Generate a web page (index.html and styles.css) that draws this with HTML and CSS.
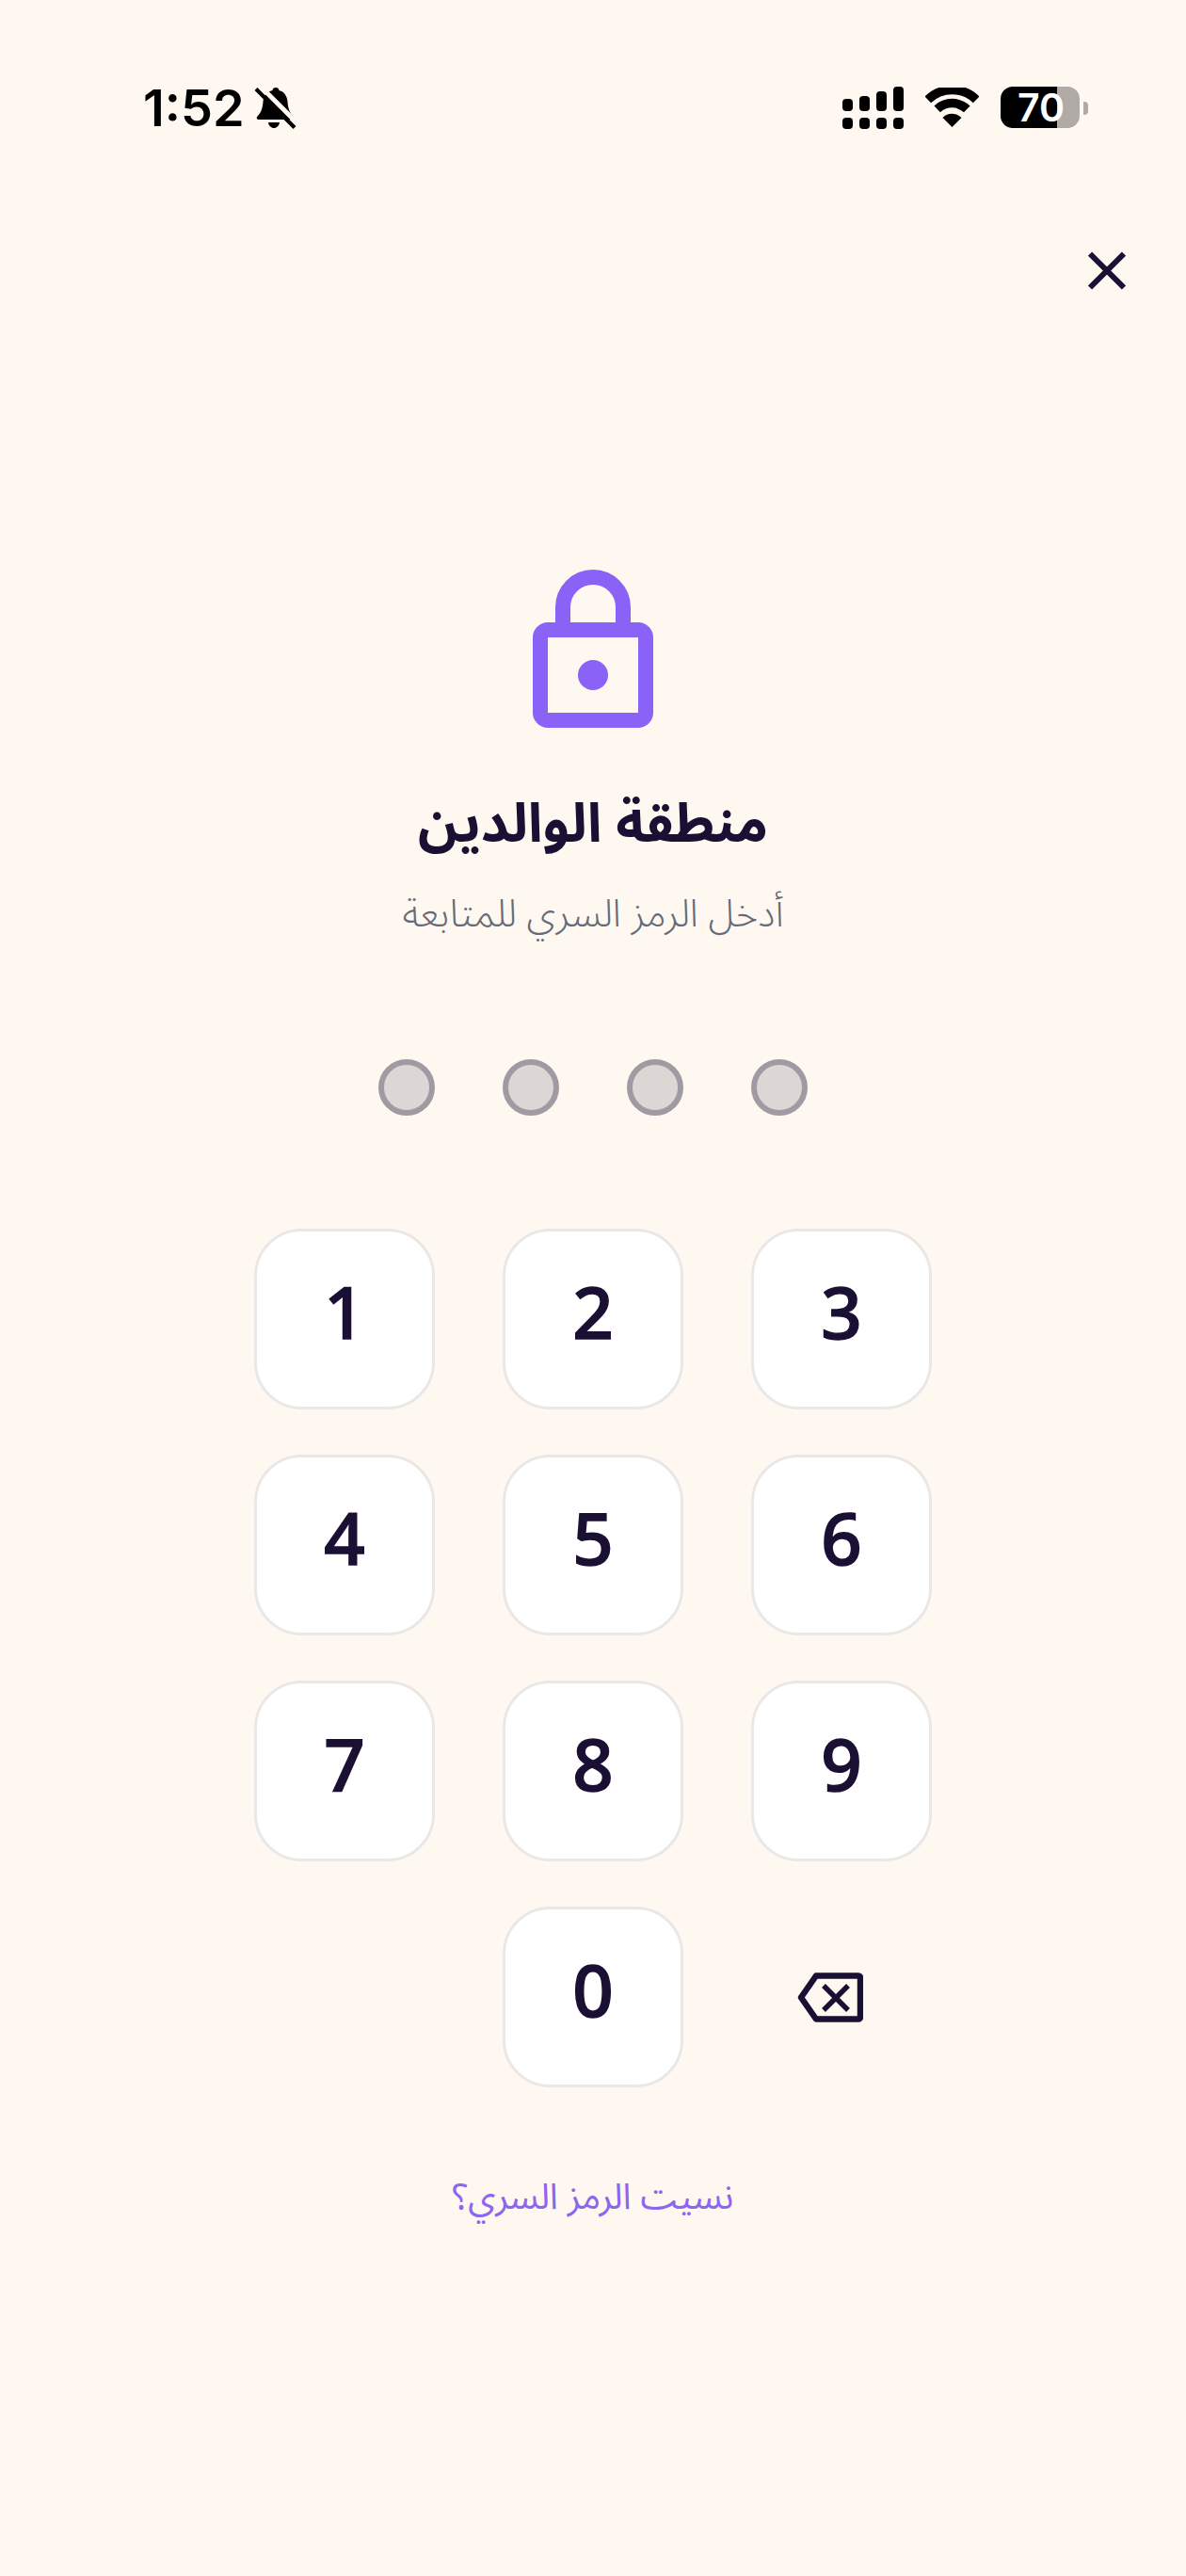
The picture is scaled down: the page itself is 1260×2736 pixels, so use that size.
FILE: index.html
```html
<!DOCTYPE html>
<html lang="ar">
<head>
    <meta charset="utf-8">
    <title>منطقة الوالدين</title>
    <link rel="stylesheet" href="styles.css">
</head>
<body>
    <div class="screen">
        <div class="status-bar">
            <div class="status-left">
                <span class="time">1:52</span>
                <svg class="bell" width="45" height="46" viewBox="0 0 45 46">
                    <path d="M23 1c2 0 3.300 1.300 3.500 3 5.500 1.300 8.500 6 9 12 .5 6 1.500 11 6 15.500 1.500 1.700.7 3.500-1.500 3.500H5c-2.200 0-3-1.800-1.500-3.500 4.500-4.500 5.500-9.500 6-15.500.5-6 3.500-10.700 10-12 .2-1.700 1.500-3 3.500-3z"/>
                    <path d="M15 38h12c-.5 3.500-3 6-6 6s-5.500-2.500-6-6z"/>
                    <path class="bell-gap" d="M6 -1L47 40"/>
                    <path class="bell-strike" d="M2 2.500L43 43.500"/>
                </svg>
            </div>
            <div class="status-right">
                <svg class="signal" width="65" height="45" viewBox="0 0 65 45">
                    <rect x="0" y="13" width="11" height="13" rx="4"/>
                    <rect x="18" y="10" width="11" height="16" rx="4"/>
                    <rect x="36" y="5" width="11" height="21" rx="4"/>
                    <rect x="54" y="0" width="11" height="26" rx="4"/>
                    <rect x="0" y="33" width="11" height="12" rx="4"/>
                    <rect x="18" y="33" width="11" height="12" rx="4"/>
                    <rect x="36" y="33" width="11" height="12" rx="4"/>
                    <rect x="54" y="33" width="11" height="12" rx="4"/>
                </svg>
                <svg class="wifi" width="57" height="42" viewBox="0 0 57 42">
                    <path class="wifi-arc" d="M2.800 12.800a37 37 0 0 1 51.400 0"/>
                    <path class="wifi-arc" d="M12.700 22.900a23 23 0 0 1 31.600 0"/>
                    <path d="M18.500 32a14 14 0 0 1 20 0L28.500 42z"/>
                </svg>
                <div class="battery"><span>70</span></div>
                <div class="battery-nub"></div>
            </div>
        </div>

        <div class="close-row">
            <svg width="40" height="41" viewBox="0 0 40 41">
                <path class="close-x" d="M2 2.500L38 38.500M38 2.500L2 38.500"/>
            </svg>
        </div>

        <svg class="lock" width="128" height="168" viewBox="0 0 128 168">
            <path class="lock-line" d="M32 64V40a32 32 0 0 1 64 0V64"/>
            <rect class="lock-line" x="8" y="64" width="112" height="96" rx="8"/>
            <circle cx="64" cy="112" r="16"/>
        </svg>

        <h1 class="title" dir="rtl">منطقة الوالدين</h1>
        <p class="subtitle" dir="rtl">أدخل الرمز السري للمتابعة</p>

        <div class="pin-dots">
            <div class="pin-dot"></div>
            <div class="pin-dot"></div>
            <div class="pin-dot"></div>
            <div class="pin-dot"></div>
        </div>

        <div class="keypad">
            <button class="key">1</button>
            <button class="key">2</button>
            <button class="key">3</button>
            <button class="key">4</button>
            <button class="key">5</button>
            <button class="key">6</button>
            <button class="key">7</button>
            <button class="key">8</button>
            <button class="key">9</button>
            <div class="key-empty"></div>
            <button class="key">0</button>
            <div class="key-back">
                <svg width="70" height="53" viewBox="0 0 70 53">
                    <path class="back-line" d="M20 3.500H65a2 2 0 0 1 2 2V47.500a2 2 0 0 1-2 2H20L4 26.500z"/>
                    <path class="back-x" d="M28 14L54 40M54 14L28 40"/>
                </svg>
            </div>
        </div>

        <a class="forgot" dir="rtl">نسيت الرمز السري؟</a>
    </div>
</body>
</html>
```

FILE: styles.css
```css
body {
    margin: 0;
    background-color: #fff8f1;
    font-family: "Noto Sans Arabic", "Noto Sans", "DejaVu Sans", sans-serif;
    color: #1a1033;
}

.screen {
    width: 1260px;
    height: 2736px;
    display: flex;
    flex-direction: column;
    align-items: center;
    overflow: hidden;
}

.status-bar {
    width: 100%;
    box-sizing: border-box;
    height: 160px;
    padding: 92px 104px 0 152px;
    display: flex;
    justify-content: space-between;
    align-items: flex-start;
}

.status-left {
    display: flex;
    align-items: center;
    gap: 10px;
}

.time {
    font-family: Inter, sans-serif;
    font-size: 54px;
    font-weight: 600;
    line-height: 46px;
    color: #000;
}

.bell-gap {
    stroke: #fff8f1;
    stroke-width: 5;
}

.bell-strike {
    stroke: #000;
    stroke-width: 4;
}

.status-right {
    display: flex;
    align-items: flex-start;
}

.signal {
    margin-right: 23px;
}

.wifi {
    margin-top: 1px;
    margin-right: 23px;
}

.wifi-arc {
    fill: none;
    stroke: #000;
    stroke-width: 9.500;
}

.battery {
    width: 84px;
    height: 44px;
    border-radius: 13px;
    background: linear-gradient(to right, #000 60px, #b0aba6 60px);
    color: #fff;
    font-family: Inter, sans-serif;
    font-size: 41px;
    font-weight: 600;
    line-height: 44px;
    padding-left: 18px;
    box-sizing: border-box;
}

.battery-nub {
    width: 5px;
    height: 14px;
    margin: 16px 0 0 4px;
    border-radius: 0 4px 4px 0;
    background-color: #b0aba6;
}

.close-row {
    width: 100%;
    box-sizing: border-box;
    padding: 107px 64px 0 0;
    display: flex;
    justify-content: flex-end;
}

.close-x {
    fill: none;
    stroke: #1a1033;
    stroke-width: 6;
}

.lock {
    margin-top: 297px;
    fill: #8b62f6;
}

.lock-line {
    fill: none;
    stroke: #8b62f6;
    stroke-width: 16;
}

.title {
    margin: 63px 0 0;
    font-size: 57.500px;
    font-weight: 700;
    line-height: 80px;
    text-align: center;
}

.subtitle {
    margin: 27px 0 0;
    font-size: 40.700px;
    font-weight: 300;
    line-height: 56px;
    color: #646b78;
    text-align: center;
}

.pin-dots {
    margin-top: 126px;
    display: flex;
    gap: 72px;
}

.pin-dot {
    width: 60px;
    height: 60px;
    box-sizing: border-box;
    border: 6px solid #a09aa2;
    border-radius: 50%;
    background-color: #dcd6d5;
}

.keypad {
    margin-top: 120px;
    display: grid;
    grid-template-columns: repeat(3, 192px);
    grid-auto-rows: 192px;
    column-gap: 72px;
    row-gap: 48px;
}

.key {
    box-sizing: border-box;
    padding: 0 0 16px;
    border: 3px solid #e9e7e7;
    border-radius: 50px;
    background-color: #fff;
    color: #1a1033;
    font-family: "Noto Sans", sans-serif;
    font-size: 76px;
    font-weight: 500;
    -webkit-text-stroke: 1.500px #1a1033;
    line-height: 1;
}

.key-back {
    display: flex;
    align-items: center;
    justify-content: center;
    padding-right: 24px;
}

.back-line {
    fill: none;
    stroke: #1a1033;
    stroke-width: 6.500;
    stroke-linejoin: round;
}

.back-x {
    fill: none;
    stroke: #1a1033;
    stroke-width: 5.500;
}

.forgot {
    margin-top: 89px;
    font-size: 38.200px;
    line-height: 56px;
    color: #8b66ee;
}
```
